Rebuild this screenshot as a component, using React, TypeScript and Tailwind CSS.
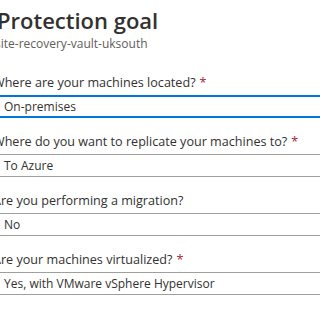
import React from "react";

const fields = [
  { label: "Where are your machines located?", required: true, value: "On-premises", focused: true },
  { label: "Where do you want to replicate your machines to?", required: true, value: "To Azure" },
  { label: "Are you performing a migration?", required: false, value: "No" },
  { label: "Are your machines virtualized?", required: true, value: "Yes, with VMware vSphere Hypervisor" },
];

export default function App() {
  return (
    <div
      className="w-[320px] h-[320px] overflow-hidden bg-white text-[#323130]"
      style={{ fontFamily: '"Segoe UI", "Open Sans", sans-serif' }}
    >
      <div className="ml-[-5px] w-[340px] pt-[6px]">
        <h1 className="text-[22px] leading-[28px] font-semibold pl-[2px]">Protection goal</h1>
        <div className="text-[12px] leading-[16px] text-[#605e5c] mt-[2px]">site-recovery-vault-uksouth</div>

        <div className="mt-[21px] flex flex-col gap-[14px]">
          {fields.map((f) => (
            <div key={f.label} className="flex flex-col gap-[2px]">
              <label className="ml-[-2px] text-[12.6px] leading-[20px] font-medium">
                {f.label}
                {f.required && <span className="text-[#a4262c] ml-[4px]">*</span>}
              </label>
              <div
                className={
                  f.focused
                    ? "h-[23px] border-2 border-[#0078d4] flex items-center pl-[7px] text-[12px]"
                    : "h-[23px] border border-[#a19f9d] flex items-center pl-[8px] text-[12px]"
                }
              >
                {f.value}
              </div>
            </div>
          ))}
        </div>
      </div>
    </div>
  );
}
